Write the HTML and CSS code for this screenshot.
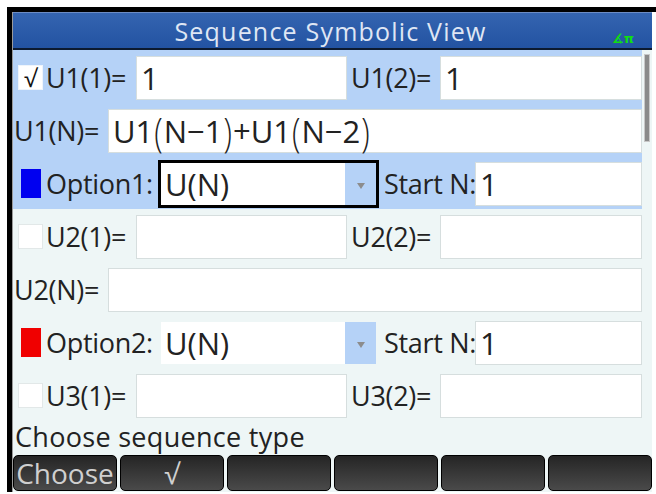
FILE: index.html
```html
<!DOCTYPE html>
<html lang="en">
<head>
<meta charset="UTF-8">
<meta name="viewport" content="width=device-width, initial-scale=1.0">
<title>Sequence Symbolic View</title>
<link rel="stylesheet" href="styles.css">
</head>
<body>
<div class="device">
    <div class="screen">
        <div class="titlebar">
            <span class="title">Sequence Symbolic View</span>
            <span class="mode">∡π</span>
        </div>

        <div class="view">
            <div class="list">
                <div class="group selected">
                    <div class="row">
                        <div class="half left">
                            <span class="check on">√</span>
                            <span class="label lbl-first">U1(1)=</span>
                            <span class="field"><span class="val">1</span></span>
                        </div>
                        <div class="half right">
                            <span class="label lbl-second">U1(2)=</span>
                            <span class="field"><span class="val">1</span></span>
                        </div>
                    </div>
                    <div class="row">
                        <span class="label lbl-expr">U1(N)=</span>
                        <span class="field"><span class="val">U1<span class="paren">(</span>N−1<span class="paren">)</span>+U1<span class="paren">(</span>N−2<span class="paren">)</span></span></span>
                    </div>
                    <div class="row">
                        <span class="swatch blue"></span>
                        <span class="label lbl-option">Option1:</span>
                        <span class="select focused">
                            <span class="val">U(N)</span>
                            <span class="arrow"></span>
                        </span>
                        <span class="label lbl-start">Start N:</span>
                        <span class="field"><span class="val">1</span></span>
                    </div>
                </div>

                <div class="group">
                    <div class="row">
                        <div class="half left">
                            <span class="check"></span>
                            <span class="label lbl-first">U2(1)=</span>
                            <span class="field"></span>
                        </div>
                        <div class="half right">
                            <span class="label lbl-second">U2(2)=</span>
                            <span class="field"></span>
                        </div>
                    </div>
                    <div class="row">
                        <span class="label lbl-expr">U2(N)=</span>
                        <span class="field"></span>
                    </div>
                    <div class="row">
                        <span class="swatch red"></span>
                        <span class="label lbl-option">Option2:</span>
                        <span class="select">
                            <span class="val">U(N)</span>
                            <span class="arrow"></span>
                        </span>
                        <span class="label lbl-start">Start N:</span>
                        <span class="field"><span class="val">1</span></span>
                    </div>
                    <div class="row">
                        <div class="half left">
                            <span class="check"></span>
                            <span class="label lbl-first">U3(1)=</span>
                            <span class="field"></span>
                        </div>
                        <div class="half right">
                            <span class="label lbl-second">U3(2)=</span>
                            <span class="field"></span>
                        </div>
                    </div>
                </div>
            </div>
            <div class="scrollbar"><div class="thumb"></div></div>
        </div>

        <div class="status">Choose sequence type</div>

        <div class="menu">
            <div class="key">Choose</div>
            <div class="key">√</div>
            <div class="key"></div>
            <div class="key"></div>
            <div class="key"></div>
            <div class="key"></div>
        </div>
    </div>
</div>
</body>
</html>
```

FILE: styles.css
```css
body {
    margin: 0;
    background-color: #fff;
    font-family: "Open Sans", "DejaVu Sans", sans-serif;
}
.device {
    margin: 7px 0 0 7px;
    width: 645px;
    border-top: 5px solid #000;
    border-left: 5px solid #000;
}
.screen {
    width: 640px;
    height: 480px;
    display: flex;
    flex-direction: column;
    background-color: #eef6f6;
    border-left: 1px solid #9a9a9a;
    box-sizing: border-box;
}

/* title bar */
.titlebar {
    position: relative;
    height: 38px;
    box-sizing: border-box;
    display: flex;
    justify-content: center;
    align-items: center;
    background: linear-gradient(#3464b0, #2353a2);
    border-top: 1px solid #6c8cc4;
    border-bottom: 2px solid #0c1a30;
}
.title {
    color: #dfe6f4;
    font-size: 25px;
    letter-spacing: 1.2px;
    margin-right: 4px;
}
.mode {
    position: absolute;
    right: 18px;
    bottom: 2px;
    color: #11dd11;
    font-size: 13px;
    font-weight: bold;
    font-family: "DejaVu Sans", sans-serif;
}

/* list of sequences */
.view {
    display: flex;
    height: 372px;
}
.list {
    flex: 1;
}
.group.selected {
    background-color: #b5d2f7;
}
.row {
    height: 53px;
    display: flex;
    align-items: center;
    padding-top: 2px;
    box-sizing: border-box;
}
.half {
    display: flex;
    align-items: center;
}
.half.left {
    width: 334px;
}
.half.right {
    flex: 1;
}
.label {
    font-size: 27px;
    color: #222;
    white-space: nowrap;
    letter-spacing: -0.3px;
}
.lbl-first {
    width: 90px;
    margin-left: 3px;
}
.lbl-second {
    width: 89px;
    padding-left: 4px;
}
.lbl-expr {
    width: 94px;
    margin-left: 1px;
}
.lbl-option {
    width: 112px;
    margin-left: 5px;
}
.lbl-start {
    width: 91px;
    padding-left: 5px;
}
.field {
    flex: 1;
    height: 44px;
    display: flex;
    align-items: center;
    background-color: #fff;
    border: 1px solid #d6dede;
    box-sizing: border-box;
}
.val {
    font-size: 31px;
    color: #222;
    padding-left: 4px;
    white-space: nowrap;
}
.paren {
    display: inline-block;
    font-weight: 300;
    transform: scaleY(1.3);
    margin: 0 1px;
}
.check {
    width: 25px;
    height: 25px;
    margin-left: 5px;
    box-sizing: border-box;
    background-color: #fff;
    border: 1px solid #e2e8e8;
    display: flex;
    align-items: center;
    justify-content: center;
    font-size: 24px;
    color: #111;
}
.check.on {
    border-color: #eef4fb;
}
.swatch {
    width: 20px;
    height: 29px;
    margin-left: 8px;
}
.swatch.blue {
    background-color: #0000f0;
}
.swatch.red {
    background-color: #f00000;
}
.select {
    width: 221px;
    height: 48px;
    display: flex;
    align-items: center;
    border: 3px solid transparent;
    box-sizing: border-box;
    background-color: #fff;
    background-clip: padding-box;
}
.select.focused {
    border-color: #000;
}
.select .val {
    flex: 1;
}
.arrow {
    width: 31px;
    align-self: stretch;
    background-color: #b5d2f7;
    display: flex;
    align-items: center;
    justify-content: center;
}
.arrow::after {
    content: "";
    border-left: 4px solid transparent;
    border-right: 4px solid transparent;
    border-top: 6px solid #8c8c8c;
    margin-top: 4px;
}

/* scrollbar */
.scrollbar {
    width: 10px;
    padding-top: 4px;
    display: flex;
    justify-content: center;
}
.thumb {
    width: 4px;
    height: 86px;
    background-color: #8a8a8a;
    border: 1px solid #c8c8c8;
}

/* status line and menu */
.status {
    height: 33px;
    font-size: 27px;
    line-height: 30px;
    color: #222;
    padding-left: 2px;
    letter-spacing: 0.3px;
}
.menu {
    flex: 1;
    display: flex;
    gap: 3px;
    padding-bottom: 1px;
}
.key {
    flex: 1;
    display: flex;
    align-items: center;
    justify-content: center;
    border: 1px solid #000;
    border-radius: 5px;
    background: linear-gradient(#252525, #4a4a4a);
    color: #cfcfcf;
    font-size: 28px;
    line-height: 1;
}
```
